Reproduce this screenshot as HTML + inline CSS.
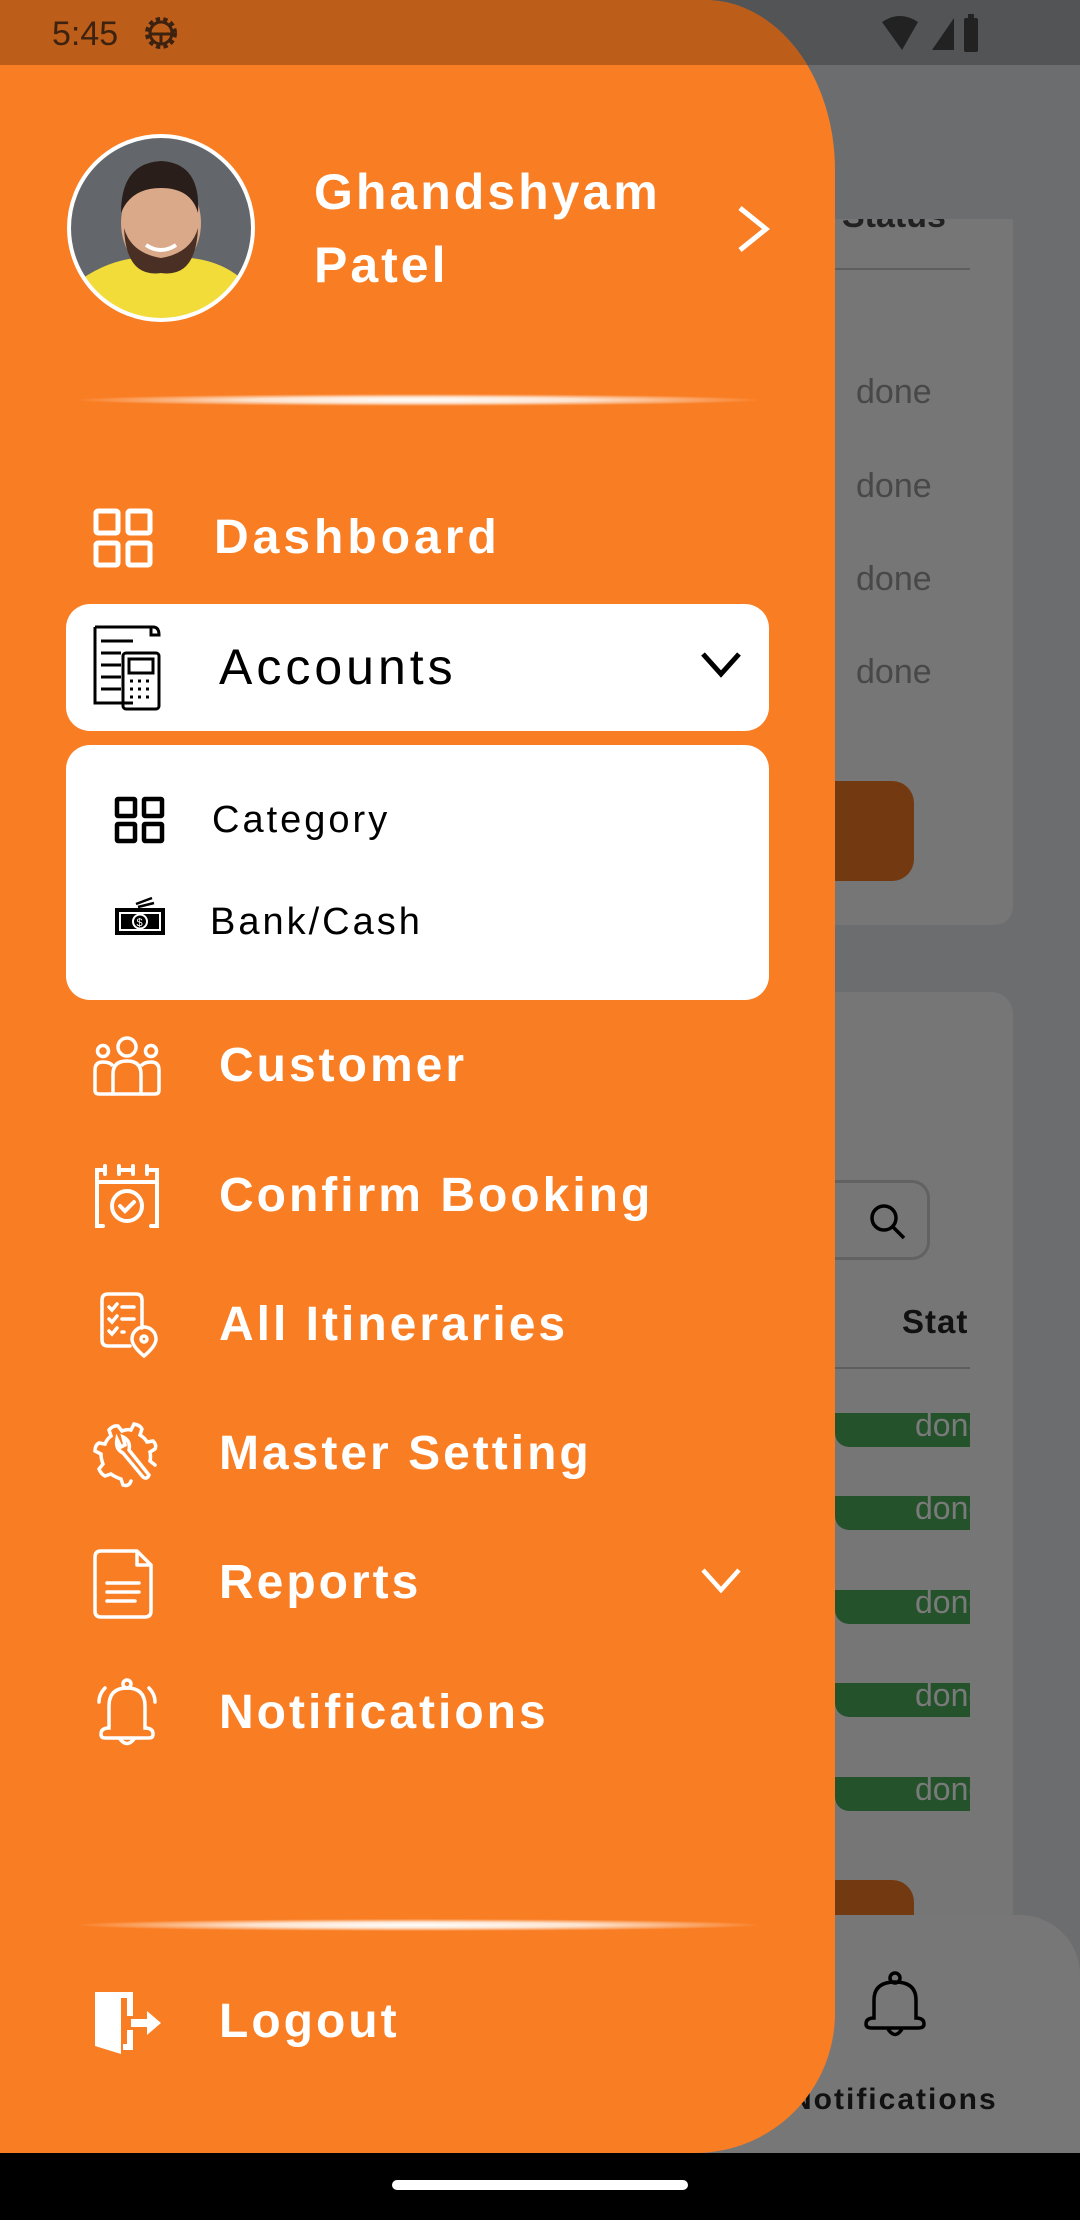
<!DOCTYPE html>
<html><head><meta charset="utf-8"><style>
*{margin:0;padding:0;box-sizing:border-box}
body{width:1080px;height:2220px;overflow:hidden;background:#6c6d6f;font-family:"Liberation Sans",sans-serif;position:relative}
.a{position:absolute}
.t{position:absolute;white-space:nowrap;height:60px;line-height:60px}
.w{color:#fff;font-size:48px;font-weight:bold;letter-spacing:3px;left:219px}
.done{color:#484848;font-size:34px;left:856px}
.pill{position:absolute;left:835px;width:135px;height:34px;background:#24522a;border-radius:0 0 0 14px;overflow:hidden}
.pill span{position:absolute;left:80px;top:-6px;color:#7a7a7a;font-size:32px}
svg{position:absolute;overflow:visible}
</style></head><body>
<div class="a" style="left:0;top:0;width:1080px;height:65px;background:#535456"></div>
<svg style="left:880px;top:14px" width="150" height="40" viewBox="0 0 150 40"><path d="M2 8 Q20 -4 38 8 L22 36 Z" fill="#222"/><path d="M52 36 L74 4 L74 36 Z" fill="#222"/><rect x="84" y="4" width="14" height="34" rx="2" fill="#222"/><rect x="88" y="0" width="6" height="5" fill="#222"/></svg>
<div class="a" style="left:800px;top:219px;width:213px;height:706px;background:#767676;border-radius:0 0 18px 0"></div>
<div class="t" style="left:842px;top:196px;font-size:34px;font-weight:bold;color:#222;height:40px;line-height:40px;clip-path:inset(23px 0 0 0)">Status</div>
<div class="a" style="left:835px;top:268px;width:135px;height:2px;background:#5e5e5e"></div>
<div class="t done" style="top:362px">done</div>
<div class="t done" style="top:456px">done</div>
<div class="t done" style="top:549px">done</div>
<div class="t done" style="top:642px">done</div>
<div class="a" style="left:800px;top:781px;width:114px;height:100px;background:#733a12;border-radius:0 22px 22px 0"></div>
<div class="a" style="left:800px;top:992px;width:213px;height:960px;background:#767676;border-radius:0 22px 0 0"></div>
<div class="a" style="left:800px;top:1180px;width:130px;height:80px;border:3px solid #626262;border-radius:18px"></div>
<svg style="left:868px;top:1202px" width="40" height="40" viewBox="0 0 40 40"><circle cx="16" cy="16" r="12" fill="none" stroke="#000" stroke-width="3.5"/><path d="M25 25 L36 36" stroke="#000" stroke-width="3.5"/></svg>
<div class="t" style="left:902px;top:1292px;font-size:33px;font-weight:bold;color:#111;width:68px;overflow:hidden;letter-spacing:1px">Status</div>
<div class="a" style="left:835px;top:1367px;width:135px;height:2px;background:#5e5e5e"></div>
<div class="pill" style="top:1413px"><span>done</span></div>
<div class="pill" style="top:1496px"><span>done</span></div>
<div class="pill" style="top:1590px"><span>done</span></div>
<div class="pill" style="top:1683px"><span>done</span></div>
<div class="pill" style="top:1777px"><span>done</span></div>
<div class="a" style="left:800px;top:1880px;width:114px;height:60px;background:#733a12;border-radius:0 22px 0 0"></div>
<div class="a" style="left:700px;top:1915px;width:380px;height:240px;background:#777;border-radius:0 60px 0 0"></div>
<svg style="left:862px;top:1972px" width="66" height="70" viewBox="0 0 66 70"><circle cx="33" cy="6" r="5" fill="none" stroke="#000" stroke-width="3.5"/><path d="M12 46 V28 Q12 10 33 10 Q54 10 54 28 V46 Q62 46 62 52 Q62 56 56 56 H10 Q4 56 4 52 Q4 46 12 46Z" fill="none" stroke="#000" stroke-width="3.5"/><path d="M26 57 Q33 68 40 57" fill="none" stroke="#000" stroke-width="3.5"/></svg>
<div class="t" style="left:790px;top:2070px;font-size:30px;font-weight:bold;color:#111;letter-spacing:2px">Notifications</div>
<div class="a" style="left:0;top:2153px;width:1080px;height:67px;background:#000"></div>
<div class="a" style="left:392px;top:2180px;width:296px;height:10px;background:#fff;border-radius:5px"></div>
<div class="a" style="left:0;top:0;width:835px;height:2153px;background:#f97d23;border-radius:0 130px 140px 0/0 170px 140px 0;overflow:hidden">
  <div class="a" style="left:0;top:0;width:835px;height:65px;background:#bd5d1a"></div>
</div>
<div class="t" style="left:52px;top:4px;font-size:34px;color:#3d2210">5:45</div>
<svg style="left:142px;top:14px" width="38" height="38" viewBox="0 0 38 38"><circle cx="19" cy="19" r="13" fill="none" stroke="#3d2210" stroke-width="6" stroke-dasharray="4 3"/><circle cx="19" cy="19" r="11" fill="none" stroke="#3d2210" stroke-width="3"/><path d="M8 20 H30 M19 20 V30" stroke="#3d2210" stroke-width="3"/></svg>
<svg style="left:66px;top:133px" width="190" height="190" viewBox="0 0 190 190">
<defs><clipPath id="c"><circle cx="95" cy="95" r="92"/></clipPath></defs>
<g clip-path="url(#c)"><rect width="190" height="190" fill="#63676c"/>
<path d="M0 190 L10 150 Q50 120 95 125 Q150 120 180 150 L190 190Z" fill="#f2dc3a"/>
<ellipse cx="95" cy="90" rx="40" ry="50" fill="#d9a98a"/>
<path d="M55 80 Q55 30 95 28 Q135 30 132 80 Q125 55 95 55 Q65 55 55 80Z" fill="#2a1e1a"/>
<path d="M58 95 Q60 145 95 140 Q130 145 132 95 Q125 120 95 125 Q65 120 58 95Z" fill="#4a3024"/>
<path d="M80 112 Q95 122 110 112" stroke="#fff" stroke-width="4" fill="none"/></g>
<circle cx="95" cy="95" r="92" fill="none" stroke="#fff" stroke-width="4"/></svg>
<div class="t" style="left:314px;top:160px;color:#fff;font-size:50px;font-weight:bold;letter-spacing:3px;height:64px;line-height:64px">Ghandshyam</div>
<div class="t" style="left:314px;top:233px;color:#fff;font-size:50px;font-weight:bold;letter-spacing:3px;height:64px;line-height:64px">Patel</div>
<svg style="left:734px;top:204px" width="40" height="50" viewBox="0 0 40 50"><path d="M6 4 L32 25 L6 46" fill="none" stroke="#fff" stroke-width="5"/></svg>
<div class="a" style="left:78px;top:394px;width:680px;height:12px;border-radius:50%;background:radial-gradient(ellipse at center,#fff 0%,#fde3cf 35%,rgba(249,125,35,0) 72%)"></div>
<div class="a" style="left:78px;top:1919px;width:680px;height:12px;border-radius:50%;background:radial-gradient(ellipse at center,#fff 0%,#fde3cf 35%,rgba(249,125,35,0) 72%)"></div>
<svg style="left:93px;top:508px" width="60" height="60" viewBox="0 0 60 60" fill="none" stroke="#fff" stroke-width="5"><rect x="3" y="3" width="22" height="22" rx="2"/><rect x="35" y="3" width="22" height="22" rx="2"/><rect x="3" y="35" width="22" height="22" rx="2"/><rect x="35" y="35" width="22" height="22" rx="2"/></svg>
<div class="t w" style="left:214px;top:508px;letter-spacing:4px">Dashboard</div>
<div class="a" style="left:66px;top:604px;width:703px;height:127px;background:#fff;border-radius:24px"></div>
<svg style="left:93px;top:623px" width="70" height="88" viewBox="0 0 70 88" fill="none" stroke="#000" stroke-width="3"><path d="M2 4 H60 Q66 4 66 12 H58 V4 M2 4 V80 H40"/><path d="M8 18 H40 M8 30 H28 M8 42 H28 M8 54 H28 M8 66 H28"/><rect x="30" y="30" width="36" height="56" rx="3"/><rect x="36" y="36" width="24" height="14"/><path d="M37 58h3M45 58h3M53 58h3M37 66h3M45 66h3M53 66h3M37 74h3M45 74h3M53 74h3" stroke-width="3"/></svg>
<div class="t" style="left:219px;top:637px;font-size:50px;color:#000;letter-spacing:4px">Accounts</div>
<svg style="left:700px;top:650px" width="42" height="30" viewBox="0 0 42 30"><path d="M3 4 L21 24 L39 4" fill="none" stroke="#000" stroke-width="5"/></svg>
<div class="a" style="left:66px;top:745px;width:703px;height:255px;background:#fff;border-radius:24px"></div>
<svg style="left:114px;top:796px" width="52" height="48" viewBox="0 0 52 48" fill="none" stroke="#000" stroke-width="4.5"><rect x="3" y="3" width="18" height="17" rx="1"/><rect x="30" y="3" width="18" height="17" rx="1"/><rect x="3" y="28" width="18" height="17" rx="1"/><rect x="30" y="28" width="18" height="17" rx="1"/></svg>
<div class="t" style="left:212px;top:790px;font-size:38px;color:#000;letter-spacing:3px">Category</div>
<svg style="left:114px;top:896px" width="52" height="40" viewBox="0 0 52 40"><path d="M22 8 L38 2 M24 11 L40 7" stroke="#000" stroke-width="2.5"/><rect x="1" y="12" width="50" height="27" fill="#000"/><rect x="6" y="17" width="40" height="17" fill="none" stroke="#fff" stroke-width="2"/><circle cx="26" cy="25.5" r="7" fill="none" stroke="#fff" stroke-width="2"/><text x="22.5" y="30" font-size="11" fill="#fff" font-family="Liberation Sans">$</text></svg>
<div class="t" style="left:210px;top:892px;font-size:38px;color:#000;letter-spacing:3px">Bank/Cash</div>
<svg style="left:93px;top:1036px" width="68" height="62" viewBox="0 0 68 62" fill="none" stroke="#fff" stroke-width="3.5"><circle cx="34" cy="11" r="9"/><circle cx="10" cy="15" r="5.5"/><circle cx="58" cy="15" r="5.5"/><path d="M20 58 V38 Q20 25 34 25 Q48 25 48 38 V58 Z"/><path d="M20 58 H6 Q2 58 2 54 V34 Q2 26 10 26 Q17 26 20 30 M48 58 H62 Q66 58 66 54 V34 Q66 26 58 26 Q51 26 48 30"/></svg>
<div class="t w" style="top:1036px">Customer</div>
<svg style="left:93px;top:1162px" width="68" height="68" viewBox="0 0 68 68" fill="none" stroke="#fff" stroke-width="4" stroke-linecap="round"><path d="M12 8 H4 V64 H10 M26 8 H40 M54 8 H64 V64 H58 M4 20 H64"/><path d="M12 4 V12 M26 4 V12 M40 4 V12 M54 4 V12"/><circle cx="34" cy="44" r="15"/><path d="M27 44 L32 49 L41 40"/></svg>
<div class="t w" style="top:1166px">Confirm Booking</div>
<svg style="left:100px;top:1292px" width="58" height="66" viewBox="0 0 58 66" fill="none" stroke="#fff" stroke-width="3.5" stroke-linecap="round"><path d="M30 54 H8 Q2 54 2 48 V8 Q2 2 8 2 H36 Q42 2 42 8 V36"/><path d="M9 15 L12 18 L17 12 M22 15 H34 M9 27 L12 30 L17 24 M22 27 H34 M9 39 L12 42 L17 36 M22 40 H24"/><path d="M44 64 Q32 54 32 47 A12 12 0 0 1 56 47 Q56 54 44 64Z"/><circle cx="44" cy="47" r="3"/></svg>
<div class="t w" style="top:1295px">All Itineraries</div>
<svg style="left:93px;top:1419px" width="70" height="70" viewBox="0 0 70 70" fill="none" stroke="#fff" stroke-width="3.5" stroke-linecap="round"><path d="M38 62 Q36 68 30 66 L28 60 Q22 58 18 55 L12 57 Q8 55 6 50 L10 45 Q8 40 8 35 L2 32 Q2 26 6 24 L12 25 Q14 20 18 17 L16 11 Q20 6 25 7 L29 12 Q34 10 38 11 L41 5 Q47 6 49 10 L47 16 Q52 19 54 23 L60 22 Q64 26 62 30 L57 33 Q58 38 57 42 L62 46"/><path d="M24 20 Q22 30 30 34 L50 58 Q54 61 56 56 L36 31 Q38 22 30 18 L32 26 L28 28 Z"/></svg>
<div class="t w" style="top:1424px">Master Setting</div>
<svg style="left:93px;top:1549px" width="62" height="70" viewBox="0 0 62 70" fill="none" stroke="#fff" stroke-width="3.5" stroke-linejoin="round"><path d="M8 2 H44 L58 16 V62 Q58 68 52 68 H8 Q2 68 2 62 V8 Q2 2 8 2Z"/><path d="M44 2 V16 H58"/><path d="M14 34 H46 M14 43 H46 M14 52 H42" stroke-linecap="round"/></svg>
<div class="t w" style="top:1553px">Reports</div>
<svg style="left:700px;top:1566px" width="42" height="30" viewBox="0 0 42 30"><path d="M3 4 L21 24 L39 4" fill="none" stroke="#fff" stroke-width="4.5"/></svg>
<svg style="left:93px;top:1676px" width="68" height="72" viewBox="0 0 68 72" fill="none" stroke="#fff" stroke-width="3.5" stroke-linecap="round"><circle cx="34" cy="8" r="4"/><path d="M16 52 V30 Q16 12 34 12 Q52 12 52 30 V52 Q60 52 60 58 Q60 62 56 62 H12 Q8 62 8 58 Q8 52 16 52Z"/><path d="M27 63 Q34 72 41 63"/><path d="M12 12 Q6 18 6 26 M56 12 Q62 18 62 26"/></svg>
<div class="t w" style="top:1683px">Notifications</div>
<svg style="left:93px;top:1988px" width="70" height="70" viewBox="0 0 70 70"><path d="M2 4 H40 V28 H34 V10 H28 V66 L2 58 Z" fill="#fff"/><path d="M34 42 H40 V62 H30 V56 H34Z" fill="#fff"/><path d="M38 31 H54 V23 L68 35 L54 47 V39 H38Z" fill="#fff"/></svg>
<div class="t w" style="top:1992px">Logout</div>
</body></html>
